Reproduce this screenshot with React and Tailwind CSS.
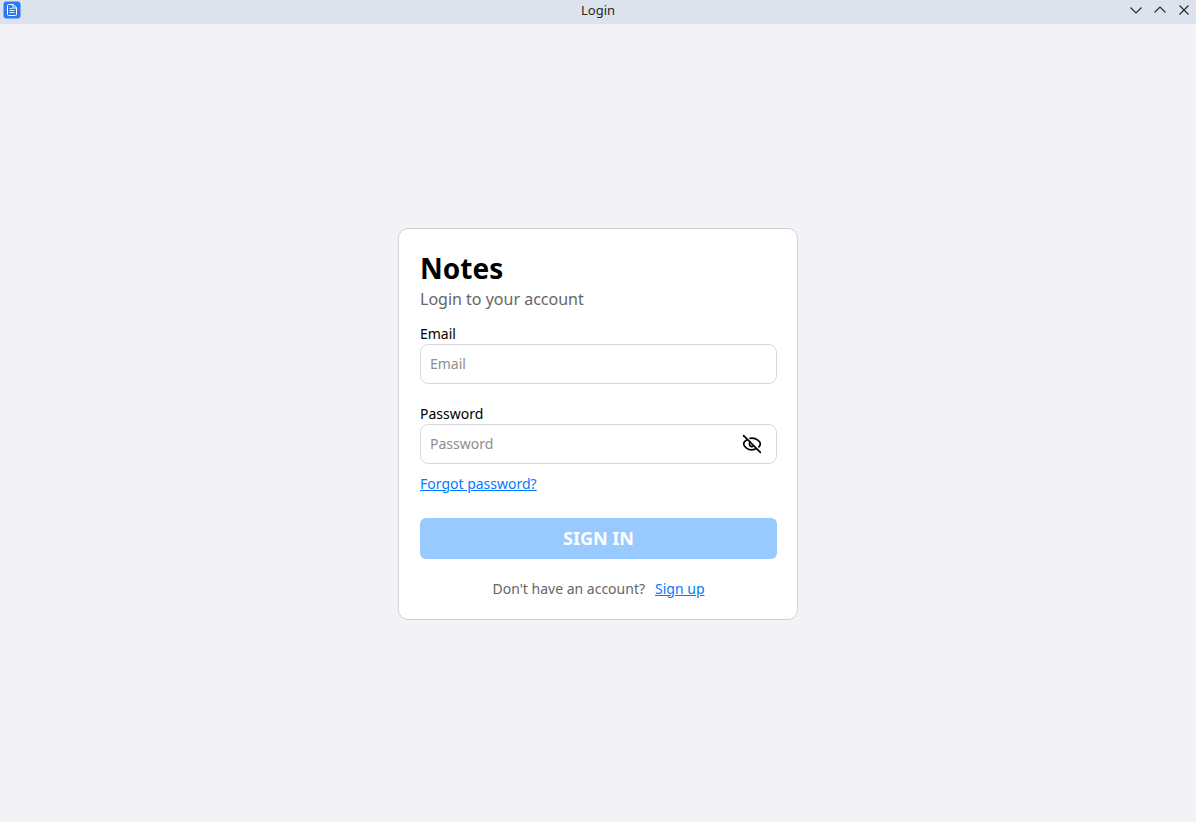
import { useState } from "react";

function AppIcon() {
  return (
    <svg width="18" height="18" viewBox="0 0 18 18" fill="none" aria-hidden="true">
      <rect x="0.5" y="0.5" width="17" height="17" rx="3" fill="#2a78f5" />
      <path
        d="M5.500 3.500h5l3 3v7a1 1 0 0 1-1 1h-7a1 1 0 0 1-1-1v-9a1 1 0 0 1 1-1zM10 3.500v3.500h3.500"
        stroke="#ffffff"
        strokeWidth="1"
      />
      <path d="M6.500 7.500h3M6.500 9.500h5M6.500 11.500h5" stroke="#dfebff" strokeWidth="1" />
    </svg>
  );
}

function EyeIcon({ off }) {
  return (
    <svg
      width="20"
      height="20"
      viewBox="0 0 24 24"
      fill="none"
      stroke="currentColor"
      strokeWidth="2"
      strokeLinecap="round"
      strokeLinejoin="round"
      aria-hidden="true"
    >
      {off ? (
        <>
          <path d="M9.880 9.880a3 3 0 1 0 4.240 4.240" />
          <path d="M9.700 5.300A10 10 0 0 1 12 5c5.500 0 10 4.200 10 7 0 1.100-.6 2.300-1.700 3.400" />
          <path d="M6.300 6.700C3.700 8.200 2 10.400 2 12c0 2.800 4.500 7 10 7 2 0 3.900-.6 5.500-1.500" />
          <path d="m2 2 20 20" />
        </>
      ) : (
        <>
          <path d="M2 12c0-2.800 4.500-7 10-7s10 4.200 10 7-4.500 7-10 7-10-4.200-10-7z" />
          <circle cx="12" cy="12" r="3" />
        </>
      )}
    </svg>
  );
}

function WindowButton({ label, path }) {
  return (
    <button type="button" aria-label={label} className="flex h-5 w-6 items-center justify-center">
      <svg width="16" height="16" viewBox="0 0 16 16" fill="none" stroke="#232629" strokeWidth="1.1" aria-hidden="true">
        <path d={path} />
      </svg>
    </button>
  );
}

function TitleBar() {
  return (
    <header className="grid h-6 grid-cols-[1fr_auto_1fr] items-start bg-[#dde3ed]">
      <div className="flex h-5 items-center pl-[3px]">
        <AppIcon />
      </div>
      <h2 className="text-[13px] leading-5 text-[#232629]">Login</h2>
      <div className="flex justify-end">
        <WindowButton label="Minimize" path="M2.500 5.500 8 11l5.500-5.500" />
        <WindowButton label="Maximize" path="M2.500 10.500 8 5l5.500 5.500" />
        <WindowButton label="Close" path="m3.500 3.500 9 9m0-9-9 9" />
      </div>
    </header>
  );
}

const fieldClass =
  "h-10 w-full rounded-lg border border-[#d8d8dc] bg-white px-[9px] text-sm text-black outline-none placeholder:text-[#8e8e8e] focus:border-[#007aff]";

export default function App() {
  const [email, setEmail] = useState("");
  const [password, setPassword] = useState("");
  const [visible, setVisible] = useState(false);

  return (
    <div className="flex min-h-screen flex-col bg-[#f2f2f7] font-['Noto_Sans',sans-serif]">
      <TitleBar />
      <main className="flex grow items-center justify-center pt-px">
        <form
          onSubmit={(e) => e.preventDefault()}
          className="flex w-full max-w-[400px] flex-col rounded-[10px] border border-[#d1d1d6] bg-white py-5 pr-5 pl-[21px]"
        >
          <h1 className="text-[28px] leading-[39px] font-bold text-black">Notes</h1>
          <p className="text-base leading-[22px] text-[#666666]">Login to your account</p>

          <label htmlFor="email" className="mt-[14px] text-sm text-black">
            Email
          </label>
          <input
            id="email"
            type="email"
            placeholder="Email"
            value={email}
            onChange={(e) => setEmail(e.target.value)}
            className={fieldClass}
          />

          <label htmlFor="password" className="mt-5 text-sm text-black">
            Password
          </label>
          <div className="relative">
            <input
              id="password"
              type={visible ? "text" : "password"}
              placeholder="Password"
              value={password}
              onChange={(e) => setPassword(e.target.value)}
              className={`${fieldClass} pr-12`}
            />
            <button
              type="button"
              aria-label={visible ? "Hide password" : "Show password"}
              onClick={() => setVisible(!visible)}
              className="absolute inset-y-0 right-[15px] flex items-center text-black"
            >
              <EyeIcon off={!visible} />
            </button>
          </div>

          <a href="#forgot" className="mt-[10px] self-start text-sm text-[#007aff] underline">
            Forgot password?
          </a>

          <button
            type="submit"
            disabled={!email || !password}
            className="mt-6 h-[41px] rounded-md bg-[#007aff] text-lg font-bold text-white disabled:bg-[#99caff]"
          >
            SIGN IN
          </button>

          <p className="mt-5 flex justify-center gap-[10px] text-sm text-[#666666]">
            Don't have an account?
            <a href="#signup" className="text-[#007aff] underline">
              Sign up
            </a>
          </p>
        </form>
      </main>
    </div>
  );
}
